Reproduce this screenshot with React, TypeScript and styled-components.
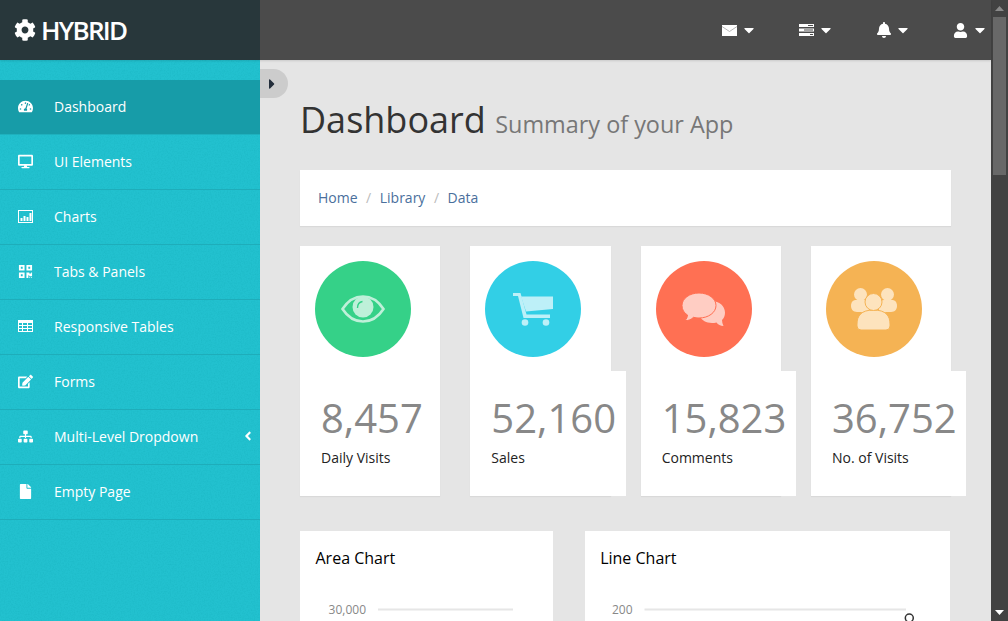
import React from "react";
import styled, { createGlobalStyle } from "styled-components";
import {
  FaCog, FaTachometerAlt, FaDesktop, FaQrcode, FaEdit, FaSitemap, FaFile,
  FaAngleLeft, FaBell, FaUser, FaCaretDown, FaCaretRight,
} from "react-icons/fa";

const noiseSvg = `<svg xmlns="http://www.w3.org/2000/svg" width="300" height="300"><filter id="n"><feTurbulence type="fractalNoise" baseFrequency="0.7" numOctaves="2" seed="4" stitchTiles="stitch"/><feColorMatrix values="0 0 0 0 0 0 0 0 0 0.3 0 0 0 0 0.35 0.3 0 0 0 -0.115"/></filter><rect width="300" height="300" filter="url(#n)"/></svg>`;
const noise = `url("data:image/svg+xml,${encodeURIComponent(noiseSvg)}")`;

const Global = createGlobalStyle`
  html, body { margin: 0; padding: 0; height: 100%; overflow: hidden; }
  body { font-family: "Open Sans", "Liberation Sans", sans-serif; background: #e5e5e5; }
  #root { height: 621px; }
  * { box-sizing: border-box; }
`;

const Shell = styled.div`
  display: flex;
  width: 1008px;
  height: 621px;
  overflow: hidden;
`;
const Page = styled.div`
  flex: 0 0 991px;
  display: flex;
  flex-direction: column;
  height: 621px;
  min-width: 0;
`;
const TopBar = styled.header`
  flex: 0 0 60px;
  display: flex;
  background: #4b4b4b;
  box-shadow: 0 1px 2px rgba(0, 0, 0, 0.12);
  position: relative;
  z-index: 2;
`;
const Brand = styled.div`
  flex: 0 0 260px;
  background: #28373b;
  color: #fff;
  display: flex;
  align-items: center;
  padding-left: 14px;
  gap: 5px;
  font-size: 26px;
  font-weight: 600;
  letter-spacing: -1.7px;
`;
const TopIcons = styled.nav`
  flex: 1;
  display: flex;
  justify-content: flex-end;
  align-items: center;
  padding-right: 3px;
  gap: 42px;
`;
const TopItem = styled.span`
  display: flex;
  align-items: center;
  gap: 4px;
  color: #fff;
`;
const TopGlyph = styled.span`
  width: 15px;
  display: flex;
  justify-content: center;
  flex: none;
  & > svg {
    flex: none;
  }
`;
const Body = styled.div`
  flex: 1;
  display: flex;
  min-height: 0;
`;
const Sidebar = styled.aside`
  flex: 0 0 260px;
  background-color: #22c1cf;
  background-image: ${noise};
  padding-top: 20px;
`;
const NavItem = styled.a<{ $active?: boolean }>`
  display: flex;
  align-items: center;
  height: 55px;
  padding: 0 0 2px 18px;
  color: #fff;
  font-size: 14px;
  background-color: ${(p) => (p.$active ? "#179ca8" : "transparent")};
  border-bottom: 1px solid ${(p) => (p.$active ? "#1eb1be" : "#1eadba")};
`;
const NavIcon = styled.span`
  width: 36px;
  display: flex;
  font-size: 15px;
`;
const NavLabel = styled.span`
  flex: 1;
`;
const NavArrow = styled.span`
  display: flex;
  margin-right: 5px;
  font-size: 14px;
`;
const Content = styled.main`
  flex: 1;
  min-width: 0;
  position: relative;
  overflow: hidden;
  padding: 35px 40px 0;
`;
const Toggle = styled.button`
  position: absolute;
  left: 0;
  top: 9px;
  width: 28px;
  height: 29px;
  padding: 0 0 0 4px;
  border: 0;
  border-radius: 0 15px 15px 0;
  background: #ccc;
  color: #222d3a;
  font-size: 16px;
  display: flex;
  align-items: center;
`;
const Heading = styled.h1`
  margin: 0;
  font-size: 36px;
  font-weight: 400;
  line-height: 50px;
  color: #333;
  display: flex;
  align-items: baseline;
  gap: 9.5px;
`;
const Sub = styled.small`
  font-size: 23.4px;
  color: #777;
`;
const Breadcrumb = styled.ol`
  list-style: none;
  margin: 21px 0 20px;
  padding: 0 18px 2px;
  width: 651px;
  height: 56px;
  background: #fff;
  box-shadow: 0 1px 1px rgba(0, 0, 0, 0.05);
  display: flex;
  align-items: center;
  font-size: 14px;
  color: #4a6f9c;
`;
const Crumb = styled.li`
  & + &::before {
    content: "/";
    color: #bbb;
    padding: 0 8.5px;
  }
`;
const Stats = styled.section`
  display: grid;
  grid-template-columns: repeat(4, 140.33px);
  column-gap: 30px;
`;
const StatCard = styled.div`
  height: 250px;
  box-shadow: 0 1px 1px rgba(0, 0, 0, 0.05);
`;
const StatTop = styled.div`
  background: #fff;
  height: 125px;
  padding: 15px;
`;
const Circle = styled.div<{ $color: string }>`
  width: 96px;
  height: 96px;
  border-radius: 50%;
  background: ${(p) => p.$color};
  display: flex;
  align-items: center;
  justify-content: center;
`;
const StatBottom = styled.div`
  background: #fff;
  height: 125px;
  min-width: 140.33px;
  width: max-content;
  padding: 20px 9.6px 0 21px;
`;
const StatNumber = styled.div`
  font-size: 40px;
  line-height: 54px;
  color: #888;
`;
const StatLabel = styled.div`
  font-size: 14px;
  line-height: 20px;
  margin-top: 3px;
  color: #222;
`;
const Charts = styled.section`
  display: flex;
  gap: 31.67px;
  margin-top: 35px;
`;
const ChartCard = styled.div<{ $w: number }>`
  width: ${(p) => p.$w}px;
  height: 300px;
  flex: none;
  background: #fff;
  padding: 15px;
`;
const ChartTitle = styled.h3`
  margin: 0 0 26px 0.5px;
  font-size: 16px;
  line-height: 24px;
  font-weight: 400;
  color: #000;
`;
const ChartPlot = styled.svg`
  display: block;
  overflow: visible;
  font-family: "Open Sans", "Liberation Sans", sans-serif;
  font-size: 12px;
  fill: #888;
`;
const Scrollbar = styled.div`
  flex: 0 0 17px;
  height: 621px;
  background: #424242;
  display: flex;
  flex-direction: column;
  align-items: stretch;
`;
const ScrollBtn = styled.div`
  height: 17px;
  display: flex;
  align-items: center;
  justify-content: center;
`;
const ScrollThumb = styled.div`
  height: 158px;
  margin: 0 2px;
  background: #686868;
`;
const ScrollFill = styled.div`
  flex: 1;
`;

const EyeIcon = () => (
  <svg width="44" height="30" viewBox="0 0 44 30" fill="none">
    <path d="M1.500 15C7 6.500 14 2.500 22 2.500S37 6.500 42.500 15C37 23.500 30 27.500 22 27.500S7 23.500 1.500 15Z" stroke="#bef0d9" strokeWidth="2.600" />
    <circle cx="22" cy="13" r="10.500" fill="#bef0d9" />
    <path d="M16.500 14c0-3.500 2-6 5-6.500" stroke="#35d188" strokeWidth="1.400" />
  </svg>
);
const CartIcon = () => (
  <svg width="40" height="33" viewBox="0 0 40 33" fill="#bdf0f8">
    <path d="M8 3.500H40V16L13 18.500Z" />
    <path d="M0 0H7.500L13.500 21.500H37V25H10.500L5 3H0Z" />
    <circle cx="12" cy="29.500" r="3.300" />
    <circle cx="33" cy="29.500" r="3.300" />
  </svg>
);
const CommentsIcon = () => (
  <svg width="43" height="33" viewBox="0 0 43 33">
    <path d="M30 8c7 0 13 5 13 11.500 0 3-1 5.500-3 7.500 0 2 .5 4 1.500 6-3 0-5.500-1.500-7-3.500-1.500.5-3 .5-4.500.5-6 0-10-3-12-6Z" fill="#ffcdc3" />
    <path d="M17 0c9.500 0 17 5.500 17 12.500S26.500 25 17 25c-2 0-4-.2-5.500-.7C9.500 26.500 6 28 3 27.500 4.500 26 5.500 24 5.500 22 2 20 0 16.500 0 12.500 0 5.500 7.500 0 17 0Z" fill="#ffcdc3" stroke="#ff7053" strokeWidth="1" />
  </svg>
);
const GroupIcon = () => (
  <svg width="46" height="42" viewBox="0 0 46 42" fill="#fde3bd">
    <circle cx="9.500" cy="6.500" r="6.500" />
    <circle cx="36.500" cy="6.500" r="6.500" />
    <path d="M0 18c0-4 2-6 5-6h8c2 0 4 2 5 5v7H6c-4 0-6-3-6-6Z" />
    <path d="M46 18c0-4-2-6-5-6h-8c-2 0-4 2-5 5v7h12c4 0 6-3 6-6Z" />
    <path d="M6 36C6 28 10 22 22.500 22S39 28 39 36v2a4 4 0 0 1-4 4H10a4 4 0 0 1-4-4Z" stroke="#f5b354" strokeWidth="1" />
    <circle cx="22.500" cy="14" r="8.500" stroke="#f5b354" strokeWidth="1" />
  </svg>
);
const ChartIcon = () => (
  <svg width="15" height="13" viewBox="0 0 15 13" fill="#fff">
    <path d="M0 0h15v13H0zM1 1v11h13V1z" fillRule="evenodd" />
    <path d="M2.500 8h2v3h-2zM5.500 6h2v5h-2zM8.500 7h2v4h-2zM11.500 3h2v8h-2z" />
  </svg>
);
const TableIcon = () => (
  <svg width="15" height="12" viewBox="0 0 15 12" fill="#fff">
    <path d="M0 0h15v12H0zM1 3v2h3V3zM5 3v2h4V3zM10 3v2h4V3zM1 6v2h3V6zM5 6v2h4V6zM10 6v2h4V6zM1 9v2h3V9zM5 9v2h4V9zM10 9v2h4V9z" fillRule="evenodd" />
  </svg>
);
const MailIcon = () => (
  <svg width="15" height="11" viewBox="0 0 15 11">
    <path d="M0 0h15v11H0z" fill="#fff" />
    <path d="M0 1.500L7.500 6.500L15 1.500" fill="none" stroke="#9a9a9a" strokeWidth="0.700" />
  </svg>
);
const ServerIcon = () => (
  <svg width="15" height="12" viewBox="0 0 15 12" fill="#fff">
    <path d="M0 0h15v3H0zM0 4.500h15v3H0zM0 9h15v3H0z" />
    <path d="M9 1h5v1H9zM5 5.500h9v1H5zM11 10h3v1h-3z" fill="#4b4b4b" />
  </svg>
);

const navItems = [
  { label: "Dashboard", icon: <FaTachometerAlt />, active: true },
  { label: "UI Elements", icon: <FaDesktop /> },
  { label: "Charts", icon: <ChartIcon /> },
  { label: "Tabs & Panels", icon: <FaQrcode /> },
  { label: "Responsive Tables", icon: <TableIcon /> },
  { label: "Forms", icon: <FaEdit /> },
  { label: "Multi-Level Dropdown", icon: <FaSitemap />, arrow: true },
  { label: "Empty Page", icon: <FaFile /> },
];

const stats = [
  { value: "8,457", label: "Daily Visits", color: "#35d188", icon: <EyeIcon /> },
  { value: "52,160", label: "Sales", color: "#32cfe6", icon: <CartIcon /> },
  { value: "15,823", label: "Comments", color: "#ff7053", icon: <CommentsIcon /> },
  { value: "36,752", label: "No. of Visits", color: "#f5b354", icon: <GroupIcon /> },
];

const topIcons = [
  <MailIcon key="mail" />,
  <ServerIcon key="server" />,
  <FaBell key="bell" size={16} />,
  <FaUser key="user" size={15} />,
];

export default function App() {
  return (
    <Shell>
      <Global />
      <Page>
        <TopBar>
          <Brand><FaCog size={22} /> HYBRID</Brand>
          <TopIcons>
            {topIcons.map((icon) => (
              <TopItem key={icon.key}>
                <TopGlyph>{icon}</TopGlyph>
                <FaCaretDown size={16} />
              </TopItem>
            ))}
          </TopIcons>
        </TopBar>
        <Body>
          <Sidebar>
            {navItems.map((n) => (
              <NavItem key={n.label} $active={n.active}>
                <NavIcon>{n.icon}</NavIcon>
                <NavLabel>{n.label}</NavLabel>
                {n.arrow && <NavArrow><FaAngleLeft /></NavArrow>}
              </NavItem>
            ))}
          </Sidebar>
          <Content>
            <Toggle aria-label="Toggle sidebar"><FaCaretRight /></Toggle>
            <Heading>Dashboard <Sub>Summary of your App</Sub></Heading>
            <Breadcrumb>
              <Crumb>Home</Crumb>
              <Crumb>Library</Crumb>
              <Crumb>Data</Crumb>
            </Breadcrumb>
            <Stats>
              {stats.map((s) => (
                <StatCard key={s.label}>
                  <StatTop><Circle $color={s.color}>{s.icon}</Circle></StatTop>
                  <StatBottom>
                    <StatNumber>{s.value}</StatNumber>
                    <StatLabel>{s.label}</StatLabel>
                  </StatBottom>
                </StatCard>
              ))}
            </Stats>
            <Charts>
              <ChartCard $w={253}>
                <ChartTitle>Area Chart</ChartTitle>
                <ChartPlot width="221" height="200">
                  <text x="51" y="18" textAnchor="end">30,000</text>
                  <line x1="63" x2="198" y1="13.500" y2="13.500" stroke="#e6e6e6" strokeWidth="2" />
                </ChartPlot>
              </ChartCard>
              <ChartCard $w={365.33}>
                <ChartTitle>Line Chart</ChartTitle>
                <ChartPlot width="333" height="200">
                  <text x="32.500" y="18" textAnchor="end">200</text>
                  <line x1="44.500" x2="306" y1="13.500" y2="13.500" stroke="#e6e6e6" strokeWidth="2" />
                  <circle cx="309.300" cy="22" r="4" fill="#fff" stroke="#333" strokeWidth="1.500" />
                </ChartPlot>
              </ChartCard>
            </Charts>
          </Content>
        </Body>
      </Page>
      <Scrollbar>
        <ScrollBtn>
          <svg width="9" height="5" viewBox="0 0 9 5" fill="#8a8a8a"><path d="M4.500 0L9 5H0z" /></svg>
        </ScrollBtn>
        <ScrollThumb />
        <ScrollFill />
        <ScrollBtn>
          <svg width="9" height="5" viewBox="0 0 9 5" fill="#fff"><path d="M0 0h9L4.500 5z" /></svg>
        </ScrollBtn>
      </Scrollbar>
    </Shell>
  );
}
